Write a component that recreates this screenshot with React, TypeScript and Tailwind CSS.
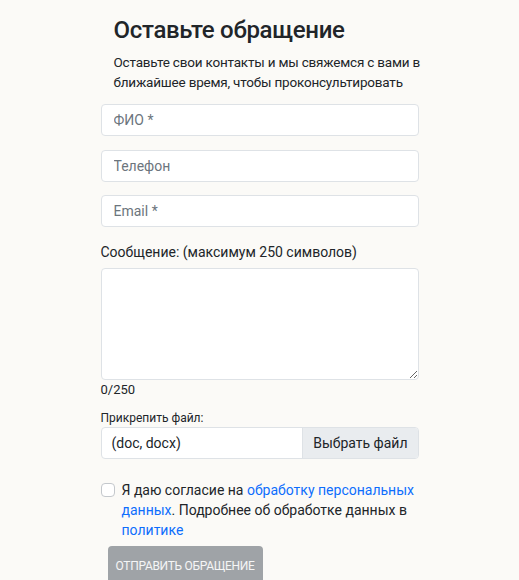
export default function App() {
  return (
    <div className="min-h-[580px] bg-[#fbfaf7] font-['Roboto',sans-serif] text-[#212529]">
      <div className="mx-auto w-[318px] pt-[14px]">
        <div className="pl-[13px]">
          <h2 className="text-[24px] font-medium leading-[32px] tracking-[-0.3px]">Оставьте обращение</h2>
          <p className="mt-[6px] w-[312px] text-[13.5px] leading-[20px] tracking-[-0.2px]">
            Оставьте свои контакты и мы свяжемся с вами в ближайшее время, чтобы проконсультировать
          </p>
        </div>

        <form className="mt-[12px] flex flex-col">
          <input
            placeholder="ФИО *"
            className="h-[32px] w-full rounded-[4px] border border-[#dee2e6] bg-white px-[12px] text-[14px] placeholder:text-[#6c757d] outline-none"
          />
          <input
            placeholder="Телефон"
            className="mt-[14px] h-[32px] w-full rounded-[4px] border border-[#dee2e6] bg-white px-[12px] text-[14px] placeholder:text-[#6c757d] outline-none"
          />
          <input
            placeholder="Email *"
            className="mt-[13px] h-[32px] w-full rounded-[4px] border border-[#dee2e6] bg-white px-[12px] text-[14px] placeholder:text-[#6c757d] outline-none"
          />

          <label className="mt-[15px] text-[14px] leading-[20px]">Сообщение: (максимум 250 символов)</label>
          <textarea className="mt-[6px] h-[112px] w-full resize-y rounded-[4px] border border-[#dee2e6] bg-white px-[12px] py-[6px] text-[14px] outline-none" />
          <div className="text-[13px] leading-[20px]">0/250</div>

          <label className="mt-[9px] text-[12px] leading-[18px]">Прикрепить файл:</label>
          <div className="flex h-[32px] w-full overflow-hidden rounded-[4px] border border-[#dee2e6] bg-white text-[14px]">
            <div className="flex flex-1 items-center px-[10px]">(doc, docx)</div>
            <div className="flex items-center border-l border-[#dee2e6] bg-[#e9ecef] px-[10px]">Выбрать файл</div>
          </div>

          <div className="mt-[21px] flex items-start gap-[7px]">
            <span className="mt-[3px] h-[14px] w-[14px] shrink-0 rounded-[4px] border border-[#c4c8cc] bg-white" />
            <p className="text-[14px] leading-[20px]">
              Я даю согласие на <a className="text-[#0d6efd]">обработку персональных данных</a>. Подробнее об обработке данных в{' '}
              <a className="text-[#0d6efd]">политике</a>
            </p>
          </div>

          <div className="ml-[7px] mt-[6px]">
            <button
              type="button"
              className="h-[40px] rounded-[4px] bg-[#9fa3a7] px-[8px] text-[12px] uppercase tracking-[-0.3px] text-white/90"
            >
              Отправить обращение
            </button>
          </div>
        </form>
      </div>
    </div>
  );
}
